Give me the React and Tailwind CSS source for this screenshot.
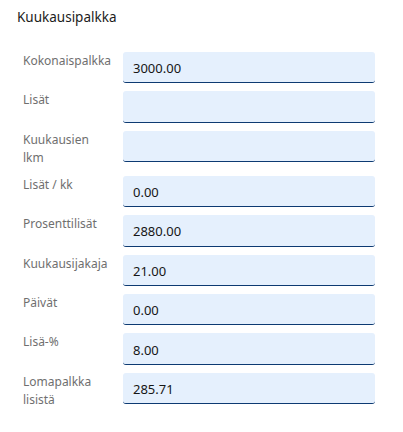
const rows = [
  { label: ["Kokonaispalkka"], value: "3000.00" },
  { label: ["Lisät"], value: "" },
  { label: ["Kuukausien", "lkm"], value: "" },
  { label: ["Lisät / kk"], value: "0.00" },
  { label: ["Prosenttilisät"], value: "2880.00" },
  { label: ["Kuukausijakaja"], value: "21.00" },
  { label: ["Päivät"], value: "0.00" },
  { label: ["Lisä-%"], value: "8.00" },
  { label: ["Lomapalkka", "lisistä"], value: "285.71" },
];

export default function App() {
  return (
    <div className="w-[403px] h-[432px] bg-white font-['Noto_Sans',sans-serif] pt-[7px]">
      <h2 className="pl-[17px] text-[13.5px] leading-[20px] text-[#1c1c1c]">Kuukausipalkka</h2>

      {/* FORM */}
      <div className="mt-[25px] pl-[23px] pr-[28px] flex flex-col gap-[8px]">
        {rows.map((r) => (
          <div key={r.label.join(" ")} className="flex items-start">
            <label className="w-[100px] shrink-0 text-[12px] leading-[18.5px] text-[#6f6f6f] whitespace-nowrap">
              {r.label.map((l, i) => (
                <div key={i}>{l}</div>
              ))}
            </label>
            <input
              type="text"
              readOnly
              value={r.value}
              className="flex-1 h-[31.4px] rounded-[3px] bg-[#e5f0fd] border-b-[1.5px] border-[#0d3a72] px-[10px] pt-[2px] text-[13px] text-[#161616] outline-none"
            />
          </div>
        ))}
      </div>
    </div>
  );
}
